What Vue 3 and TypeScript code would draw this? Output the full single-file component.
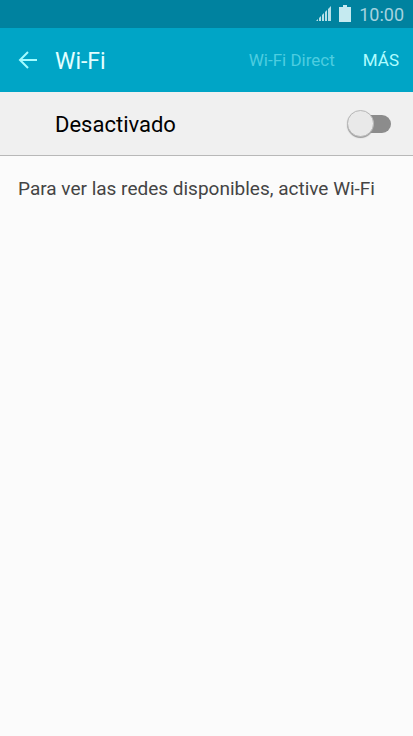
<script setup lang="ts">
import { ref } from 'vue'

const enabled = ref<boolean>(false)
</script>

<template>
  <div class="screen">
    <div class="status">
      <svg class="signal" width="16" height="16" viewBox="0 0 16 16" aria-hidden="true">
        <path d="M0 15l2-2v2zM3 12l2-2v5H3zM6 9l2-2v8H6zM9 6l2-2v11H9zM12 3l3-3v15h-3z" fill="#b4dfe7" />
      </svg>
      <svg class="battery" width="12" height="18" viewBox="0 0 12 18" aria-hidden="true">
        <path d="M4 0h4v2h4v15H0V2h4z" fill="#c5eaf0" />
      </svg>
      <time class="clock">10:00</time>
    </div>
    <header class="bar">
      <button class="back" type="button" aria-label="Atrás">
        <svg width="20" height="20" viewBox="0 0 20 20" aria-hidden="true">
          <path d="M19 10H2M10 2L2 10l8 8" fill="none" stroke="#a3fcff" stroke-width="2" />
        </svg>
      </button>
      <h1 class="title">Wi-Fi</h1>
      <button class="action" type="button" disabled>Wi-Fi Direct</button>
      <button class="action" type="button">MÁS</button>
    </header>
    <label class="toggle">
      <span>{{ enabled ? 'Activado' : 'Desactivado' }}</span>
      <input v-model="enabled" class="switch" type="checkbox" role="switch" />
    </label>
    <p class="hint">Para ver las redes disponibles, active Wi-Fi</p>
  </div>
</template>

<style>
body {
  background: #fbfbfb;
}
</style>

<style scoped>
.screen {
  min-height: 100vh;
  background: #fbfbfb;
  font-family: Roboto, sans-serif;
  color: #000;
}
.status {
  display: flex;
  align-items: center;
  justify-content: flex-end;
  height: 28px;
  padding: 0 9px;
  background: #00829f;
}
.battery {
  margin: 0 8px 0 7px;
}
.clock {
  padding-top: 2px;
  font-size: 18px;
  line-height: 28px;
  color: #a5d3df;
}
.bar {
  display: flex;
  align-items: center;
  gap: 28px;
  height: 64px;
  padding: 0 14px 0 18px;
  background: #00a5c6;
}
.back,
.action {
  padding: 0;
  border: 0;
  background: none;
  font: inherit;
  color: #b0fcff;
}
.back {
  display: flex;
  margin-right: -11px;
}
.title {
  flex: 1;
  margin: 0;
  padding-top: 4px;
  font-size: 23px;
  font-weight: 400;
  line-height: 28px;
  color: #e2ffff;
}
.action {
  font-size: 17px;
  line-height: 24px;
}
.action:disabled {
  color: #4dcde0;
}
.toggle {
  display: flex;
  align-items: center;
  justify-content: space-between;
  height: 63px;
  padding: 0 22px 0 55px;
  border-bottom: 1px solid #b8b8b8;
  background: #f0f0f0;
  font-size: 22px;
  line-height: 28px;
}
.toggle span {
  padding-top: 2px;
}
.switch {
  appearance: none;
  position: relative;
  width: 44px;
  height: 28px;
  margin: 0;
}
.switch::before {
  content: '';
  position: absolute;
  inset: 5px 0 5px 8px;
  border-radius: 9px;
  background: #8c8c8c;
}
.switch::after {
  content: '';
  position: absolute;
  top: 0;
  left: 0;
  box-sizing: border-box;
  width: 27px;
  height: 27px;
  border: 1px solid #b8b8b8;
  border-radius: 50%;
  background: #e9e9e9;
  box-shadow: 0 1px 1px #999;
}
.switch:checked::before {
  background: #7fd3e3;
}
.switch:checked::after {
  left: 17px;
  background: #00a7c8;
}
.hint {
  margin: 0;
  padding: 21px 18px;
  font-size: 19px;
  line-height: 24px;
  color: #444;
}
</style>
